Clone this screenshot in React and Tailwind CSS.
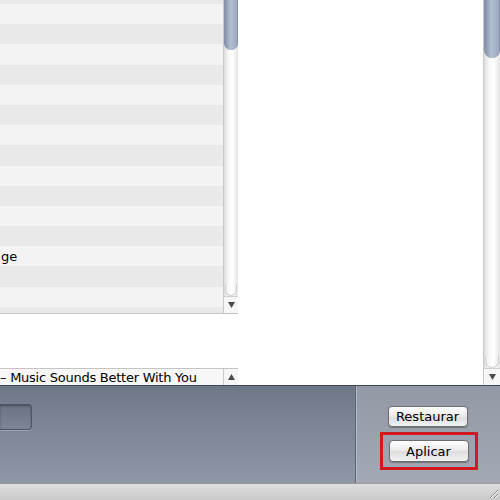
import React from 'react';

const rows = Array.from({ length: 16 }, (_, i) => (i === 12 ? 'ge' : ''));

const Thumb = ({ h }) => (
  <div
    className={`w-full ${h} rounded-b-full bg-[linear-gradient(to_right,#8391aa,#b3bfd2_45%,#9ba8c0)] border-x border-[#8492a9]`}
  />
);

const Track = ({ children, className = '' }) => (
  <div
    className={`flex flex-col bg-[linear-gradient(to_right,#dcdcdc,#f7f7f7_30%,#ffffff_60%,#e4e4e4)] border-l border-[#c9c9c9] ${className}`}
  >
    {children}
  </div>
);

const Arrow = ({ up }) => (
  <div className="h-[17px] flex items-center justify-center border-t border-[#d0d0d0] bg-[#f6f6f6]">
    <svg width="7" height="6" viewBox="0 0 7 6">
      <path d={up ? 'M3.5 0 L7 6 L0 6 Z' : 'M0 0 L7 0 L3.5 6 Z'} fill="#4a4a4a" />
    </svg>
  </div>
);

const App = () => {
  return (
    <div className="w-[500px] h-[500px] flex flex-col overflow-hidden bg-white font-['DejaVu_Sans',sans-serif] text-[13px] text-black">
      <div className="h-[385px] flex">
        <div className="flex-1 flex flex-col">
          <div className="h-[314px] w-[238px] flex border-b border-[#c4c4c4]">
            <div className="flex-1 flex flex-col overflow-hidden pt-[4px] bg-[#e9e9e9]">
              {rows.map((r, i) => (
                <div
                  key={i}
                  className={`h-[20.2px] shrink-0 flex items-center leading-none pl-[1px] ${i % 2 === 0 ? 'bg-[#f3f3f3]' : 'bg-[#e9e9e9]'}`}
                >
                  {r}
                </div>
              ))}
            </div>
            <Track className="w-[15px]">
              <Thumb h="h-[50px]" />
              <div className="flex-1" />
              <div className="h-[12px] mx-[1px] rounded-b-full border-b border-x border-[#cfcfcf]" />
              <Arrow />
            </Track>
          </div>
          <div className="flex-1" />
          <div className="h-[17px] w-[238px] flex border-t border-[#c4c4c4]">
            <div className="flex-1 flex items-center leading-none whitespace-nowrap bg-[#f7f7f7]">
              <span className="tracking-[-0.25px]">– Music Sounds Better With You</span>
            </div>
            <div className="w-[15px] flex items-center justify-center border-l border-[#c9c9c9] bg-[#f6f6f6]">
              <svg width="7" height="6" viewBox="0 0 7 6">
                <path d="M3.5 0 L7 6 L0 6 Z" fill="#4a4a4a" />
              </svg>
            </div>
          </div>
        </div>
        <Track className="w-[17px]">
          <Thumb h="h-[58px]" />
          <div className="flex-1" />
          <div className="h-[12px] mx-[1px] rounded-b-full border-b border-x border-[#cfcfcf]" />
          <Arrow />
        </Track>
      </div>

      <div className="h-[98px] flex border-t border-[#3e4553]">
        <div className="flex-1 pt-[18px] bg-[linear-gradient(to_bottom,#6e7888,#7f8898_50%,#8e97a5)]">
          <div className="w-[32px] h-[26px] rounded-r-[4px] border border-[#4e5664] border-l-0 bg-[linear-gradient(to_bottom,#6a7383,#7d8696)] shadow-[inset_0_1px_2px_rgba(0,0,0,0.35),0_1px_0_rgba(255,255,255,0.25)]" />
        </div>
        <div className="w-[1px] bg-[#5c6472]" />
        <div className="w-[144px] flex flex-col items-center pt-[20px] bg-[linear-gradient(to_bottom,#939aa6,#a2a9b4)] border-l border-[#b6bcc5]">
          <button className="w-[80px] h-[21px] rounded-[4px] border border-[#6e6e6e] bg-[linear-gradient(to_bottom,#ffffff,#e9e9e9_50%,#dcdcdc_51%,#f2f2f2)] text-[13px] leading-none text-black shadow-[0_1px_1px_rgba(0,0,0,0.3)] ml-[-2px]">
            Restaurar
          </button>
          <div className="mt-[5px] border-[3px] border-[#d11a1f] px-[6px] py-[5px]">
            <button className="w-[80px] h-[22px] rounded-[4px] border border-[#6e6e6e] bg-[linear-gradient(to_bottom,#ffffff,#e9e9e9_50%,#dcdcdc_51%,#f2f2f2)] text-[13px] leading-none text-black shadow-[0_1px_1px_rgba(0,0,0,0.3)] block">
              Aplicar
            </button>
          </div>
        </div>
      </div>

      <div className="flex-1 flex justify-end items-end border-t border-[#9a9a9a] bg-[linear-gradient(to_bottom,#dedede,#c9c9c9)]">
        <svg width="12" height="12" viewBox="0 0 12 12" className="mb-[1px] mr-[1px]">
          <path d="M11 3 L3 11 M11 7 L7 11" stroke="#8a8a8a" strokeWidth="1" />
          <path d="M11 4 L4 11 M11 8 L8 11" stroke="#f5f5f5" strokeWidth="1" />
        </svg>
      </div>
    </div>
  );
};

export default App;
